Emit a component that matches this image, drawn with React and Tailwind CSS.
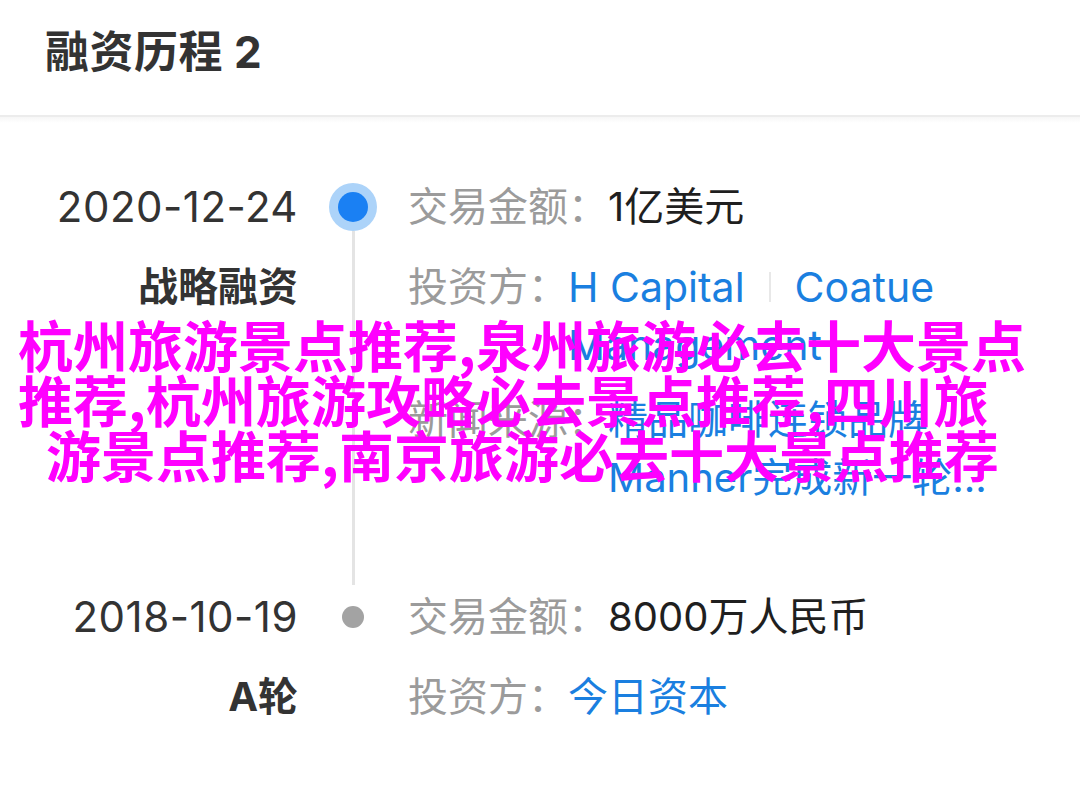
import React from "react";

const FONT = { fontFamily: 'Inter, "Noto Sans CJK SC", sans-serif' };

function Row({ label, children, className = "" }) {
  return (
    <div className={`flex ${className}`}>
      <span className="shrink-0 text-[#9b9b9b]">{label}</span>
      <div className="flex flex-col">{children}</div>
    </div>
  );
}

export default function App() {
  return (
    <div
      className="relative w-[1080px] h-[789px] overflow-hidden bg-white"
      style={FONT}
    >
      {/* Header */}
      <div className="h-[117px] flex items-center pl-[45px] pb-[12px] border-b-2 border-[#ececec]">
        <h1 className="text-[44px] font-bold text-[#333333] leading-none tracking-[0.5px]">
          融资历程 2
        </h1>
      </div>
      <div className="h-[6px] bg-gradient-to-b from-[#f6f6f6] to-white" />

      {/* Timeline */}
      <div className="pt-[55px] flex flex-col text-[40px] leading-[58px]">
        {/* Item 1 */}
        <div className="flex pb-[81px]">
          <div className="w-[298px] shrink-0 flex flex-col items-end gap-[22px] text-[#333333]">
            <div className="text-[42px] tracking-[0.5px]">2020-12-24</div>
            <div className="font-bold">战略融资</div>
          </div>
          <div className="w-[110px] shrink-0 flex flex-col items-center">
            <div className="h-[58px] flex items-center justify-center">
              <div className="w-[48px] h-[48px] rounded-full bg-[#acd3f9] flex items-center justify-center">
                <div className="w-[30px] h-[30px] rounded-full bg-[#1a80f3]" />
              </div>
            </div>
            <div className="flex-1 w-[3px] bg-[#e4e4e4] -mt-[5px] -mb-[78px]" />
          </div>
          <div className="flex-1 flex flex-col">
            <Row label="交易金额：">
              <span className="text-[#1f1f1f]">1亿美元</span>
            </Row>
            <Row label="投资方：" className="mt-[22px]">
              <div className="flex items-center text-[#1a7fe0] text-[41px]">
                <span>H Capital</span>
                <span className="mx-[24px] w-[2px] h-[30px] bg-[#e8e8e8]" />
                <span>Coatue</span>
              </div>
              <span className="text-[#1a7fe0] text-[41px]">Management</span>
            </Row>
            <Row label="新闻来源：" className="mt-[17px]">
              <span className="text-[#1a7fe0]">精品咖啡连锁品牌</span>
              <span className="text-[#1a7fe0]">Manner完成新一轮...</span>
            </Row>
          </div>
        </div>

        {/* Item 2 */}
        <div className="flex">
          <div className="w-[298px] shrink-0 flex flex-col items-end gap-[22px] text-[#333333]">
            <div className="text-[42px] tracking-[0.5px]">2018-10-19</div>
            <div className="font-bold">A轮</div>
          </div>
          <div className="w-[110px] shrink-0 flex flex-col items-center">
            <div className="h-[58px] flex items-center justify-center">
              <div className="w-[22px] h-[22px] rounded-full bg-[#a3a3a3]" />
            </div>
          </div>
          <div className="flex-1 flex flex-col gap-[22px]">
            <Row label="交易金额：">
              <span className="text-[#1f1f1f]">8000万人民币</span>
            </Row>
            <Row label="投资方：">
              <span className="text-[#1a7fe0]">今日资本</span>
            </Row>
          </div>
        </div>
      </div>

      {/* Watermark overlay */}
      <div
        className="absolute left-0 top-[316px] w-full text-[55px] leading-[55px] font-bold text-[#ff00ff] whitespace-nowrap"
        style={{ fontFamily: '"Noto Sans CJK SC", sans-serif' }}
      >
        <div className="pl-[18px]">杭州旅游景点推荐,泉州旅游必去十大景点</div>
        <div className="pl-[18px]">推荐,杭州旅游攻略必去景点推荐,四川旅</div>
        <div className="pl-[46px]">游景点推荐,南京旅游必去十大景点推荐</div>
      </div>
    </div>
  );
}
